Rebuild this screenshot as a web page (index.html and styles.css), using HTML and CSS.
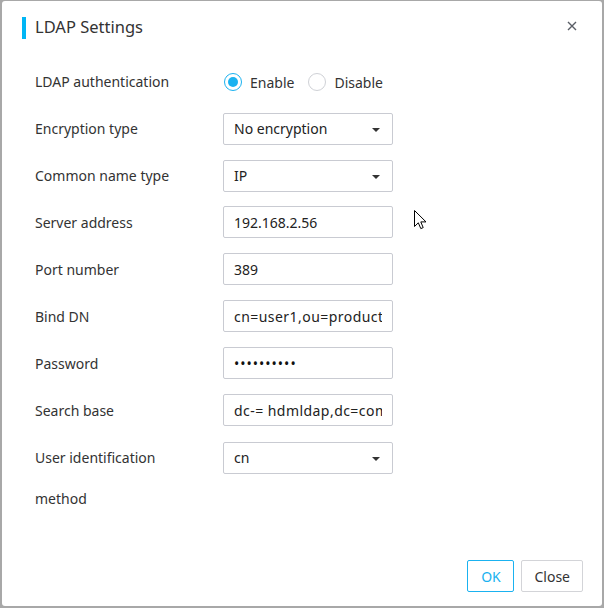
FILE: index.html
```html
<!DOCTYPE html>
<html lang="en">
<head>
<meta charset="utf-8">
<title>LDAP Settings</title>
<link rel="stylesheet" href="styles.css">
</head>
<body>
<div class="dialog">
  <div class="header">
    <span class="title-bar"></span>
    <h1 class="title">LDAP Settings</h1>
    <button class="close" type="button" aria-label="Close">
      <svg width="10" height="10" viewBox="0 0 10 10"><path d="M1 1 L9 9 M9 1 L1 9" stroke="#5a5e66" stroke-width="1.4" fill="none"/></svg>
    </button>
  </div>
  <div class="form">
    <div class="row">
      <div class="label">LDAP authentication</div>
      <div class="control radios">
        <label class="radio"><span class="dot checked"></span>Enable</label>
        <label class="radio"><span class="dot"></span>Disable</label>
      </div>
    </div>
    <div class="row">
      <div class="label">Encryption type</div>
      <div class="control box select">No encryption<span class="caret"></span></div>
    </div>
    <div class="row">
      <div class="label">Common name type</div>
      <div class="control box select">IP<span class="caret"></span></div>
    </div>
    <div class="row">
      <div class="label">Server address</div>
      <input class="control box field" type="text" value="192.168.2.56" readonly>
    </div>
    <div class="row">
      <div class="label">Port number</div>
      <input class="control box field" type="text" value="389" readonly>
    </div>
    <div class="row">
      <div class="label">Bind DN</div>
      <input class="control box field wide" type="text" value="cn=user1,ou=product,ou=test" readonly>
    </div>
    <div class="row">
      <div class="label">Password</div>
      <input class="control box field pwd" type="password" value="1234567890" readonly>
    </div>
    <div class="row">
      <div class="label">Search base</div>
      <input class="control box field wide" type="text" value="dc-= hdmldap,dc=com" readonly>
    </div>
    <div class="row">
      <div class="label">User identification method</div>
      <div class="control box select">cn<span class="caret"></span></div>
    </div>
  </div>
  <div class="footer">
    <button class="btn primary" type="button">OK</button>
    <button class="btn" type="button">Close</button>
  </div>
</div>
<svg class="cursor" width="13" height="20" viewBox="0 0 13 20"><path d="M0.5 0.5 L0.5 16.5 L4.3 12.8 L6.8 18.6 L9.2 17.6 L6.8 11.9 L12 11.9 Z" fill="#fff" stroke="#000" stroke-width="1" stroke-linejoin="round"/></svg>
</body>
</html>
```
FILE: styles.css
```css
* { box-sizing: border-box; }
html, body { margin: 0; padding: 0; }
body {
  background: #a8a8a8;
  width: 604px;
  height: 608px;
  padding: 1px 2px 0 2px;
  position: relative;
  font-family: "Noto Sans", "Open Sans", sans-serif;
  color: #333;
}
.dialog {
  width: 600px;
  height: 605px;
  background: #fff;
  border-radius: 3px;
  display: flex;
  flex-direction: column;
}
.header {
  display: flex;
  align-items: center;
  padding: 15px 0 0 20px;
  height: 38px;
}
.title-bar {
  width: 4px;
  height: 22px;
  background: #00b6f5;
  margin-right: 9px;
}
.title {
  margin: -2px 0 0 0;
  font-size: 16.5px;
  font-weight: normal;
  color: #333;
  flex: 1;
  line-height: 22px;
}
.close {
  border: 0;
  background: none;
  padding: 0;
  width: 10px;
  height: 10px;
  margin-right: 25px;
  margin-top: -4px;
  display: flex;
}
.form {
  padding: 22px 0 0 33px;
  display: flex;
  flex-direction: column;
  gap: 6px;
}
.row {
  display: flex;
  align-items: flex-start;
}
.label {
  width: 188px;
  padding-right: 30px;
  font-size: 14px;
  line-height: 41px;
  color: #333;
}
.control {
  margin-top: 5px;
  width: 170px;
  height: 32px;
}
.field { margin-top: 4px; }
.radios {
  display: flex;
  align-items: center;
  gap: 13px;
}
.radio {
  display: flex;
  align-items: center;
  font-size: 14px;
  color: #333;
}
.dot {
  width: 18px;
  height: 18px;
  border: 1px solid #cfd1d6;
  border-radius: 50%;
  margin: 0 8px 0 1px;
  display: flex;
  align-items: center;
  justify-content: center;
}
.dot.checked { border-color: #1ab2f0; }
.dot.checked::after {
  content: "";
  width: 10px;
  height: 10px;
  border-radius: 50%;
  background: #1ab2f0;
}
.box {
  border: 1px solid #c9cbd2;
  border-radius: 2px;
  padding: 0 10px;
  font-family: inherit;
  font-size: 14px;
  line-height: 30px;
  color: #222;
  background: #fff;
  white-space: nowrap;
  overflow: hidden;
  display: flex;
  align-items: center;
  outline: none;
}
.wide { letter-spacing: 0.45px; }
.select { position: relative; }
.caret {
  position: absolute;
  right: 12px;
  top: 14px;
  width: 0;
  height: 0;
  border-left: 4px solid transparent;
  border-right: 4px solid transparent;
  border-top: 4px solid #333;
}
.pwd { letter-spacing: 1px; font-size: 14px; color: #111; }
.footer {
  margin-top: auto;
  display: flex;
  justify-content: flex-end;
  gap: 7px;
  padding: 0 19px 14px 0;
}
.btn {
  height: 32px;
  padding: 0 12px;
  border: 1px solid #d3d4d8;
  border-radius: 2px;
  background: #fff;
  font-family: inherit;
  font-size: 14px;
  color: #333;
}
.btn.primary {
  border-color: #1ab2f0;
  color: #1ab2f0;
  width: 47px;
  padding: 0;
}
.cursor {
  position: absolute;
  left: 414px;
  top: 210px;
}
```
